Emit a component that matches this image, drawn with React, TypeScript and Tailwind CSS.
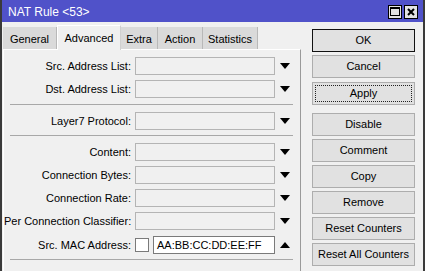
import React from "react";

const font = { fontFamily: '"Liberation Sans", Arial, sans-serif' };

function Arrow({ up = false }: { up?: boolean }) {
  return (
    <svg width="10" height="6" viewBox="0 0 10 6" className="ml-[5px]">
      {up ? <polygon points="0,6 10,6 5,0" fill="#000" /> : <polygon points="0,0 10,0 5,6" fill="#000" />}
    </svg>
  );
}

function Row({ label, mt = "mt-[5px]" }: { label: string; mt?: string }) {
  return (
    <div className={`flex items-center h-[18px] ${mt}`}>
      <div className="w-[131px] text-right pr-[4px] whitespace-nowrap">{label}:</div>
      <div className="w-[140px] h-[18px] border border-[#b4b4b4] bg-[#f0f0f0]" />
      <Arrow />
    </div>
  );
}

function Sep({ mt }: { mt: string }) {
  return <div className={`h-px bg-[#a8a8a8] ml-[6px] w-[283px] ${mt}`} />;
}

function Btn({ children, mt = "mt-[3px]", kind }: { children: React.ReactNode; mt?: string; kind?: "ok" | "focus" }) {
  const border = kind === "ok" ? "border-[#111]" : "border-[#adadad]";
  return (
    <div className={`w-[103px] h-[23px] ${mt} border ${border} bg-[#e1e1e1] flex items-center justify-center p-[2px] whitespace-nowrap`}>
      <div className={`w-full h-full flex items-center justify-center ${kind === "focus" ? "border border-dotted border-[#222]" : ""}`}>
        {children}
      </div>
    </div>
  );
}

const tabs: [string, string][] = [
  ["General", "w-[54px]"],
  ["Advanced", "w-[64px]"],
  ["Extra", "w-[37px]"],
  ["Action", "w-[45px]"],
  ["Statistics", "w-[55px]"],
];

export default function App() {
  return (
    <div className="w-[425px] h-[271px] bg-[#f0f0f0] border-l-2 border-r-2 border-[#3a3a3a] overflow-hidden text-[11px] text-black" style={font}>
      <div className="h-[22px] bg-[#5052c9] flex items-center justify-between -mx-[2px] pl-[8px] pr-[7px]">
        <span className="text-white text-[12px] pt-px">NAT Rule &lt;53&gt;</span>
        <div className="flex gap-[2px] pt-px">
          <div className="w-[14px] h-[14px] bg-[#e3e3e3] border border-black flex items-center justify-center">
            <div className="w-[10px] h-[9px] border border-black border-t-2" />
          </div>
          <div className="w-[14px] h-[14px] bg-[#e3e3e3] border border-black flex items-center justify-center">
            <svg width="8" height="8" viewBox="0 0 8 8">
              <path d="M1 1 L7 7 M7 1 L1 7" stroke="#000" strokeWidth="2" />
            </svg>
          </div>
        </div>
      </div>
      <div className="flex">
        <div className="w-[299px] pl-px">
          <div className="flex items-end h-[27px] pt-[3px]">
            {tabs.map(([t, w]) =>
              t === "Advanced" ? (
                <div key={t} className={`${w} h-[25px] bg-[#f0f0f0] border border-b-0 border-[#d0d0d0] border-t-white border-l-white flex justify-center pt-[4px] -mb-px relative z-10`}>
                  {t}
                </div>
              ) : (
                <div key={t} className={`${w} h-[22px] bg-[#dadada] border-r border-[#b8b8b8] flex items-center justify-center pt-[2px]`}>
                  {t}
                </div>
              )
            )}
          </div>
          <div className="h-[230px] border-t border-l border-white border-r border-r-[#9a9a9a] pt-[7px]">
            <Row label="Src. Address List" mt="mt-0" />
            <Row label="Dst. Address List" />
            <Sep mt="mt-[6px]" />
            <Row label="Layer7 Protocol" mt="mt-[7px]" />
            <Sep mt="mt-[5px]" />
            <Row label="Content" mt="mt-[7px]" />
            <Row label="Connection Bytes" />
            <Row label="Connection Rate" />
            <Row label="Per Connection Classifier" />
            <div className="flex items-center h-[18px] mt-[6px]">
              <div className="w-[131px] text-right pr-[4px] whitespace-nowrap">Src. MAC Address:</div>
              <div className="w-[14px] h-[14px] border border-[#7a7a7a] bg-white" />
              <div className="w-[122px] h-[18px] ml-[4px] border border-[#7a7a7a] bg-white flex items-center pl-[3px]">AA:BB:CC:DD:EE:FF</div>
              <Arrow up />
            </div>
            <Sep mt="mt-[5px]" />
          </div>
        </div>
        <div className="pl-[11px] pt-[7px]">
          <Btn mt="mt-0" kind="ok">OK</Btn>
          <Btn>Cancel</Btn>
          <Btn mt="mt-[4px]" kind="focus">Apply</Btn>
          <Btn mt="mt-[8px]">Disable</Btn>
          <Btn>Comment</Btn>
          <Btn>Copy</Btn>
          <Btn>Remove</Btn>
          <Btn>Reset Counters</Btn>
          <Btn>Reset All Counters</Btn>
        </div>
      </div>
    </div>
  );
}
